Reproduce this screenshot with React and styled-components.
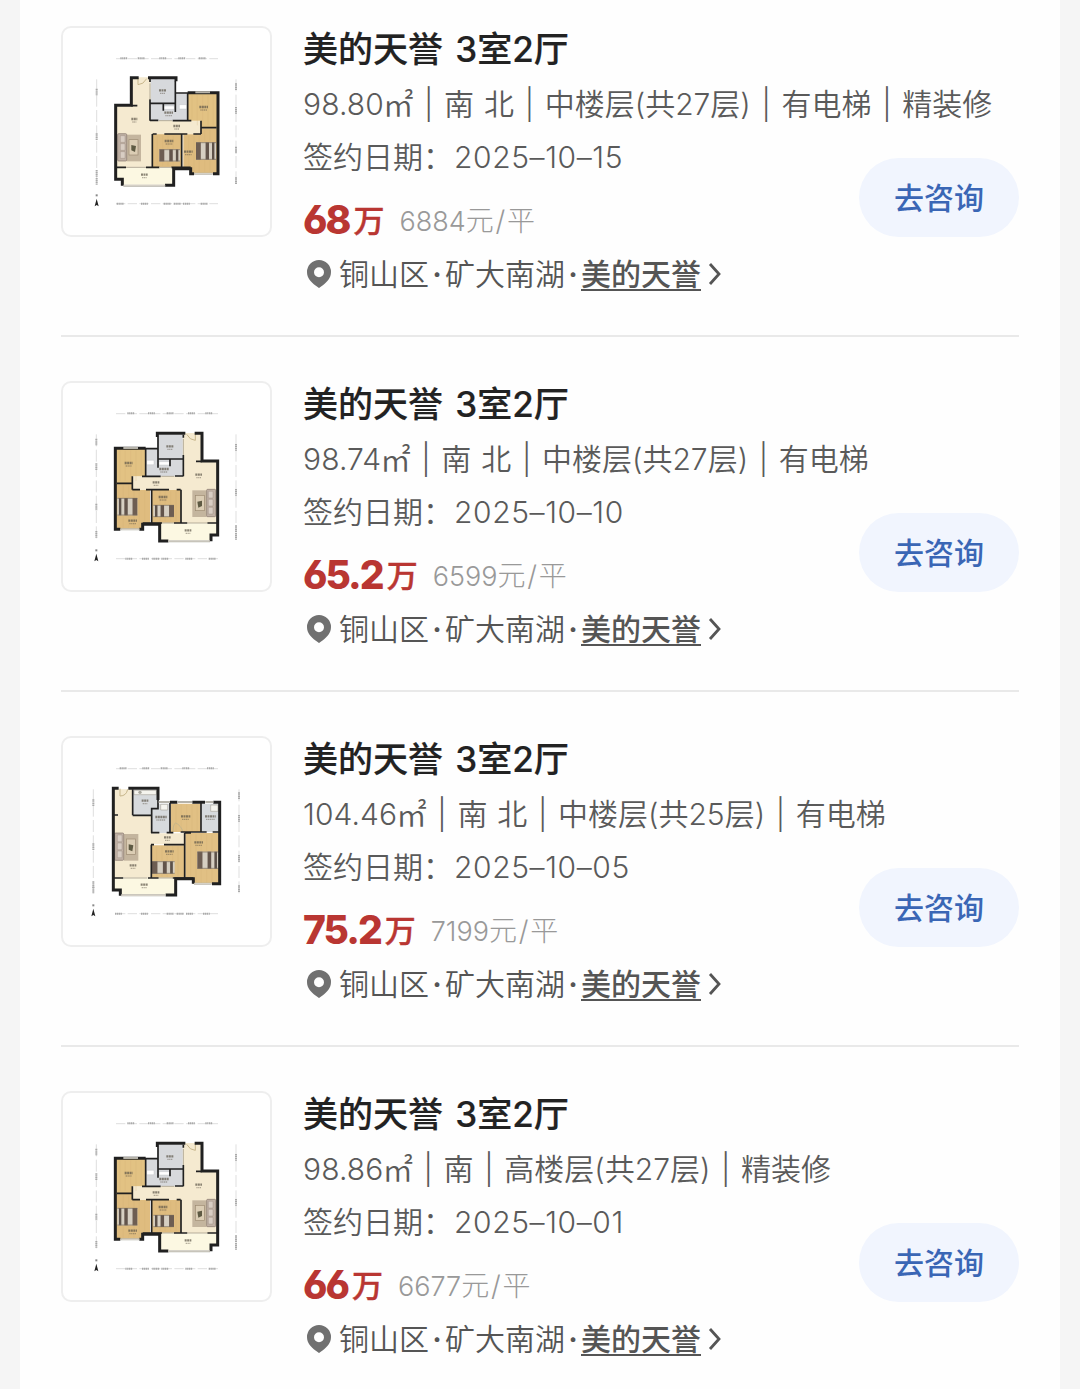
import React from "react";
import styled, { createGlobalStyle } from "styled-components";

const GlobalStyle = createGlobalStyle`
  body {
    margin: 0;
    background: #f5f5f5;
    font-family: Inter, "Noto Sans CJK SC", sans-serif;
  }
`;

const Page = styled.main`
  box-sizing: border-box;
  width: 1040px;
  height: 1389px;
  margin: 0 auto;
  padding: 0 41px;
  overflow: hidden;
  background: #fefefe;
`;

const Row = styled.article`
  box-sizing: border-box;
  display: grid;
  grid-template-columns: 211px 1fr;
  column-gap: 31px;
  align-items: start;
  height: ${(props) => (props.$first ? "337px" : "355.2px")};
  padding-top: ${(props) => (props.$first ? "26px" : "44px")};
  border-bottom: 2px solid #e9e9e9;
`;

const Thumb = styled.div`
  box-sizing: border-box;
  width: 211px;
  height: 211px;
  border: 2px solid #eeeeee;
  border-radius: 10px;
  background: #fff;

  svg {
    display: block;
    width: 207px;
    height: 207px;
  }
`;

const Title = styled.h2`
  margin: 0 0 6px;
  font-size: 35px;
  font-weight: 500;
  line-height: 46px;
  word-spacing: 3px;
  color: #222;
  white-space: nowrap;
  -webkit-text-stroke: 0.2px #222;
`;

const Specs = styled.div`
  display: flex;
  height: 53px;
  font-size: 30px;
  font-weight: 350;
  line-height: 53px;
  color: #5a5a5a;
  white-space: pre;
  word-spacing: 1.5px;
`;

const Area = styled.span`
  letter-spacing: 0.1px;
`;

const SquareMetre = styled.span`
  margin-left: -1px;
  font-size: 30.5px;
`;

const Separator = styled.span`
  width: 30.7px;
  text-align: center;
`;

const Lower = styled.div`
  display: flex;
  justify-content: space-between;
  align-items: flex-start;
`;

const SignDate = styled.div`
  display: flex;
  font-size: 30px;
  font-weight: 350;
  line-height: 53px;
  color: #5a5a5a;
`;

const DateText = styled.span`
  margin-left: 1px;
  letter-spacing: 0.6px;
`;

const Price = styled.div`
  display: flex;
  align-items: flex-start;
  height: 40px;
  margin-top: 15px;
  color: #b93632;
`;

const Amount = styled.span`
  font-size: 39px;
  font-weight: 800;
  line-height: 41px;
  letter-spacing: -2px;
  font-feature-settings: "cv03", "cv04";
`;

const Wan = styled.span`
  margin-left: 4px;
  font-size: 31px;
  font-weight: 500;
  line-height: 44px;
  -webkit-text-stroke: 0.4px #b93632;
`;

const Unit = styled.span`
  margin-left: 15px;
  font-size: 27px;
  font-weight: 300;
  line-height: 45px;
  color: #999;
`;

const UnitSuffix = styled.span`
  font-size: 28px;
  letter-spacing: 1.8px;
`;

const Place = styled.div`
  display: flex;
  align-items: center;
  height: 40px;
  margin-top: 15px;
  font-size: 30px;
  font-weight: 350;
  line-height: 40px;
  color: #555;
  white-space: nowrap;
`;

const Pin = styled.svg`
  width: 24px;
  height: 28px;
  margin: 0 8px 0 4px;
`;

const Dot = styled.span`
  width: 16px;
  text-align: center;
  font-weight: 600;
`;

const Estate = styled.span`
  height: 31px;
  margin-top: 1px;
  line-height: 32px;
  border-bottom: 2px solid #555;
  font-weight: 500;
`;

const Chevron = styled.svg`
  width: 13px;
  height: 24px;
  margin-left: 7px;
`;

const AskButton = styled.button`
  width: 160px;
  height: 79px;
  margin: 27px 0 0;
  padding: 0 0 4px;
  border: 0;
  border-radius: 40px;
  background: #f1f5fe;
  color: #3a66b5;
  font-family: inherit;
  font-size: 30px;
  font-weight: 500;
`;

// short smudges standing for room names, [x, y, width]
const Labels = ({ items }) =>
  items.map(([x, y, w]) => (
    <g key={`${x}-${y}`} stroke="#5d5548" fill="none">
      <path d={`M${x - w / 2} ${y - 3}h${w}`} strokeWidth="7" strokeDasharray="6 1.5" opacity=".7" />
      <path d={`M${x - w / 2 + 3} ${y + 6}h${w - 6}`} strokeWidth="4" strokeDasharray="4 1.5" opacity=".45" />
    </g>
  ));

const Rulers = ({ left, right, ticks }) => (
  <g fill="none">
    <g stroke="#cfcfcf" strokeWidth="2">
      <path d="M198 116H504M198 551H504" strokeDasharray="28 7" />
      <path d={`M${left} 178V492M${right} 178V492`} strokeDasharray="36 10" />
    </g>
    <g stroke="#aaa" strokeWidth="6" strokeDasharray="4 1.5">
      {ticks.top.map((x) => <path key={x} d={`M${x - 11} 115h22`} />)}
      {ticks.bottom.map((x) => <path key={x} d={`M${x - 11} 551h22`} />)}
      {ticks.left.map((y) => <path key={y} d={`M${left} ${y - 10}v20`} />)}
      {ticks.right.map((y) => <path key={y} d={`M${right} ${y - 10}v20`} />)}
    </g>
    <path d={`M${left - 3} 526h6`} stroke="#888" strokeWidth="6" />
    <path d={`M${left} 536l6 23-6-4-6 4z`} fill="#222" />
  </g>
);

const Bed = ({ x, y, w, h }) => (
  <g transform={`translate(${x} ${y})`}>
    <rect width={w} height={h} fill="#d6cfc2" />
    <rect width={w * 0.24} height={h} fill="#6d5d52" />
    <rect x={w * 0.48} width={w * 0.17} height={h} fill="#62544b" />
    <rect x={w * 0.8} width={w * 0.12} height={h} fill="#5c5149" />
    <path d={`M0 1H${w}M0 ${h - 1}H${w}`} stroke="#79695a" strokeWidth="2" />
  </g>
);

const Sofa = ({ x, y, rugX }) => (
  <g>
    <rect x={rugX} y={y + 3} width="43" height="80" fill="#c4b59e" />
    <rect x={rugX + 7} y={y + 18} width="27" height="46" fill="#dbcdb4" stroke="#9c8b73" strokeWidth="2" />
    <path d={`M${rugX + 14} ${y + 34}l14 3-3 18-11-5z`} fill="#5e5a43" />
    <rect x={x} y={y} width="27" height="82" rx="3" fill="#c0b1a5" stroke="#83736a" strokeWidth="2" />
    <path
      d={`M${x + 8} ${y + 6}h14v20h-14zM${x + 8} ${y + 30}h14v20h-14zM${x + 8} ${y + 54}h14v20h-14z`}
      fill="#d8cdc3"
      stroke="#8e7e74"
    />
  </g>
);

const PlanA = ({ mirrored, labels, ticks }) => (
  <svg viewBox="39 24 621 621">
    <Rulers left={mirrored ? 139 : 140} right={558} ticks={ticks} />
    <g transform={mirrored ? "translate(700 2) scale(-1 1)" : undefined}>
      <path d="M244 172H302V302H453V343H397V442H198V256H244z" fill="#f5ead0" />
      <path d="M198 443H370V494H217V477H198z" fill="#fcf8e2" />
      <path d="M302 177H377V302H302zM377 220H412V302H377z" fill="#d7d9dc" />
      <path d="M412 219H502V323H453V302H412z" fill="#e2c283" />
      <path d="M308 343H394V441H308zM400 343H453V325H502V460H424V443H400z" fill="#dfbc7f" />
      <path d="M426 225V296M442 225V316M458 225V316M474 225V316M490 225V316M322 348V437M338 348V437M354 348V437M370 348V437M416 348V438M432 348V456M448 348V456M464 330V456M480 330V456" stroke="#d2b075" strokeWidth="1" opacity=".7" />
      <Sofa x={203} y={341} rugX={230} />
      <Bed x={328} y={388} w={62} h={36} />
      <Bed x={438} y={367} w={60} h={52} />
      <path d="M388 254h22v13h-22zM341 258h32v10h-32z" fill="#fff" stroke="#b4b7ba" />
      <path d="M264 174v20q16 0 26-18" fill="none" stroke="#c7b68b" strokeWidth="3" />
      <g fill="none" stroke="#202020">
        <path d="M266 173H244V256H197V478H217V497M294 173H378V184M413 218H504V461H489M432 461H422V446H371V496H345" strokeWidth="9" />
        <path d="M244 257H262M376 183V276M300 177V186M300 238V302M300 250H376M340 250V272M300 301H325M376 219H413V302M368 302H424M453 302V342M453 323H500M430 342H453M308 342H320M343 342H412M307 342V441M395 342V441M198 442H228M288 442H328M364 442H422" strokeWidth="5" />
        <path d="M220 497H346M432 461H488M436 217H480" stroke="#b5b2a9" strokeWidth="6" />
        <path d="M222 496H344M434 461H486" stroke="#eeeae0" strokeWidth="2" />
        <path d="M228 442H288M328 442H364M300 190V238M327 302H366" stroke="#b5ad98" strokeWidth="3" />
      </g>
    </g>
    <Labels items={labels} />
  </svg>
);

const PlanB = () => (
  <svg viewBox="39 24 621 621">
    <Rulers
      left={130}
      right={567}
      ticks={{ top: [220, 288, 343, 408, 482], bottom: [206, 284, 361, 391, 419, 470], left: [218, 350, 464, 480], right: [197, 265, 385, 476] }}
    />
    <path d="M192 178H247V257H303V310H404V343H303V443H192z" fill="#f5ead0" />
    <path d="M190 445H376V494H211V480H190z" fill="#fcf8e2" />
    <path d="M248 180H323V256H248zM305 221H360V309H305zM456 221H508V306H456z" fill="#d7dadd" />
    <path d="M363 221H452V306H363zM305 346H402V443H305zM406 309H508V461H429V445H406z" fill="#e1c084" />
    <path d="M378 224V303M394 224V303M410 224V303M426 224V303M442 224V303M320 349V440M336 349V440M352 349V440M368 349V440M384 349V440M422 313V440M438 313V458M454 313V458M470 313V458M486 313V458" stroke="#d2b075" opacity=".7" />
    <Sofa x={194} y={309} rugX={222} />
    <Bed x={306} y={394} w={68} h={37} />
    <Bed x={442} y={365} w={64} h={51} />
    <path d="M252 181h67v13h-67zM332 223h21v17h-21zM482 225h22v19h-22z" fill="#f5f4ee" stroke="#aaa89f" strokeWidth="2" />
    <circle cx="270" cy="187" r="5" fill="#aaa89f" />
    <path d="M210 176v22q19 0 23-20M369 304q1-24 8-25 16 7 22 27" fill="none" stroke="#c7b68b" strokeWidth="3" />
    <g fill="none" stroke="#202020">
      <path d="M206 175H190V480H211V497M235 175H324V210M360 217H382M427 217H465M490 217H509V461H486M430 461V446H377V495H347" strokeWidth="9" />
      <path d="M248 178V256M248 256H303M324 210V236H305V309M360 217V307M303 308H328M350 308H370M392 306H453V219M453 306H470M488 306H508M404 309H423M404 309V443M303 344H312M342 344H404M304 344V443M192 444H220M294 444H326M368 444H430M192 255H204" strokeWidth="5" />
      <path d="M213 496H347M432 461H485M383 216H426M466 216H490M326 216H360" stroke="#b5b2a9" strokeWidth="6" />
      <path d="M215 496H345M434 461H484" stroke="#eeeae0" strokeWidth="2" />
      <path d="M222 444H292M326 444H368" stroke="#b5ad98" strokeWidth="3" />
    </g>
    <Labels items={[[285, 215, 20], [333, 264, 34], [407, 262, 28], [481, 262, 32], [352, 325, 20], [446, 340, 26], [358, 367, 26], [249, 409, 20], [283, 467, 22]]} />
  </svg>
);

const mirroredLabels = [[360, 217, 22], [236, 267, 24], [342, 285, 28], [446, 302, 20], [318, 325, 20], [339, 369, 26], [248, 440, 26], [414, 469, 20]];

const plans = {
  left: (
    <PlanA
      labels={[[338, 214, 22], [461, 264, 26], [356, 281, 26], [253, 300, 18], [380, 321, 20], [357, 366, 26], [415, 398, 26], [283, 467, 20]]}
      ticks={{ top: [222, 274, 339, 396, 457], bottom: [211, 284, 352, 382, 410, 463], left: [216, 350, 460, 484], right: [200, 271, 390, 482] }}
    />
  ),
  right: (
    <PlanA
      mirrored
      labels={mirroredLabels}
      ticks={{ top: [243, 305, 361, 425, 477], bottom: [237, 287, 318, 345, 417, 487], left: [201, 275, 396, 478], right: [217, 352, 461, 484] }}
    />
  ),
  wide: <PlanB />,
};

const listings = [
  { area: "98.80", specs: ["南 北", "中楼层(共27层)", "有电梯", "精装修"], date: "2025–10–15", price: "68", unit: "6884", plan: "left" },
  { area: "98.74", specs: ["南 北", "中楼层(共27层)", "有电梯"], date: "2025–10–10", price: "65.2", unit: "6599", plan: "right" },
  { area: "104.46", specs: ["南 北", "中楼层(共25层)", "有电梯"], date: "2025–10–05", price: "75.2", unit: "7199", plan: "wide" },
  { area: "98.86", specs: ["南", "高楼层(共27层)", "精装修"], date: "2025–10–01", price: "66", unit: "6677", plan: "right" },
];

const Listing = ({ item, first }) => (
  <Row $first={first}>
    <Thumb>{plans[item.plan]}</Thumb>
    <div>
      <Title>美的天誉 3室2厅</Title>
      <Specs>
        <Area>{item.area}</Area>
        <SquareMetre>㎡</SquareMetre>
        {item.specs.map((text) => (
          <React.Fragment key={text}>
            <Separator>|</Separator>
            <span>{text}</span>
          </React.Fragment>
        ))}
      </Specs>
      <Lower>
        <div>
          <SignDate>
            <span>签约日期：</span>
            <DateText>{item.date}</DateText>
          </SignDate>
          <Price>
            <Amount>{item.price}</Amount>
            <Wan>万</Wan>
            <Unit>
              {item.unit}
              <UnitSuffix>元/平</UnitSuffix>
            </Unit>
          </Price>
          <Place>
            <Pin viewBox="0 0 24 28">
              <path fillRule="evenodd" fill="#707070" d="M12 0a12 12 0 0 1 12 12c0 6-4 10-8.500 13.500L12 28l-3.500-2.500C4 22 0 18 0 12A12 12 0 0 1 12 0zm0 7.200a5 5 0 1 0 0 10 5 5 0 0 0 0-10z" />
            </Pin>
            <span>铜山区</span>
            <Dot>·</Dot>
            <span>矿大南湖</span>
            <Dot>·</Dot>
            <Estate>美的天誉</Estate>
            <Chevron viewBox="0 0 13 24">
              <path d="M2 2l9 10-9 10" fill="none" stroke="#555" strokeWidth="2.800" />
            </Chevron>
          </Place>
        </div>
        <AskButton>去咨询</AskButton>
      </Lower>
    </div>
  </Row>
);

const App = () => (
  <>
    <GlobalStyle />
    <Page>
      {listings.map((item, i) => (
        <Listing key={item.area} item={item} first={i === 0} />
      ))}
    </Page>
  </>
);

export default App;
